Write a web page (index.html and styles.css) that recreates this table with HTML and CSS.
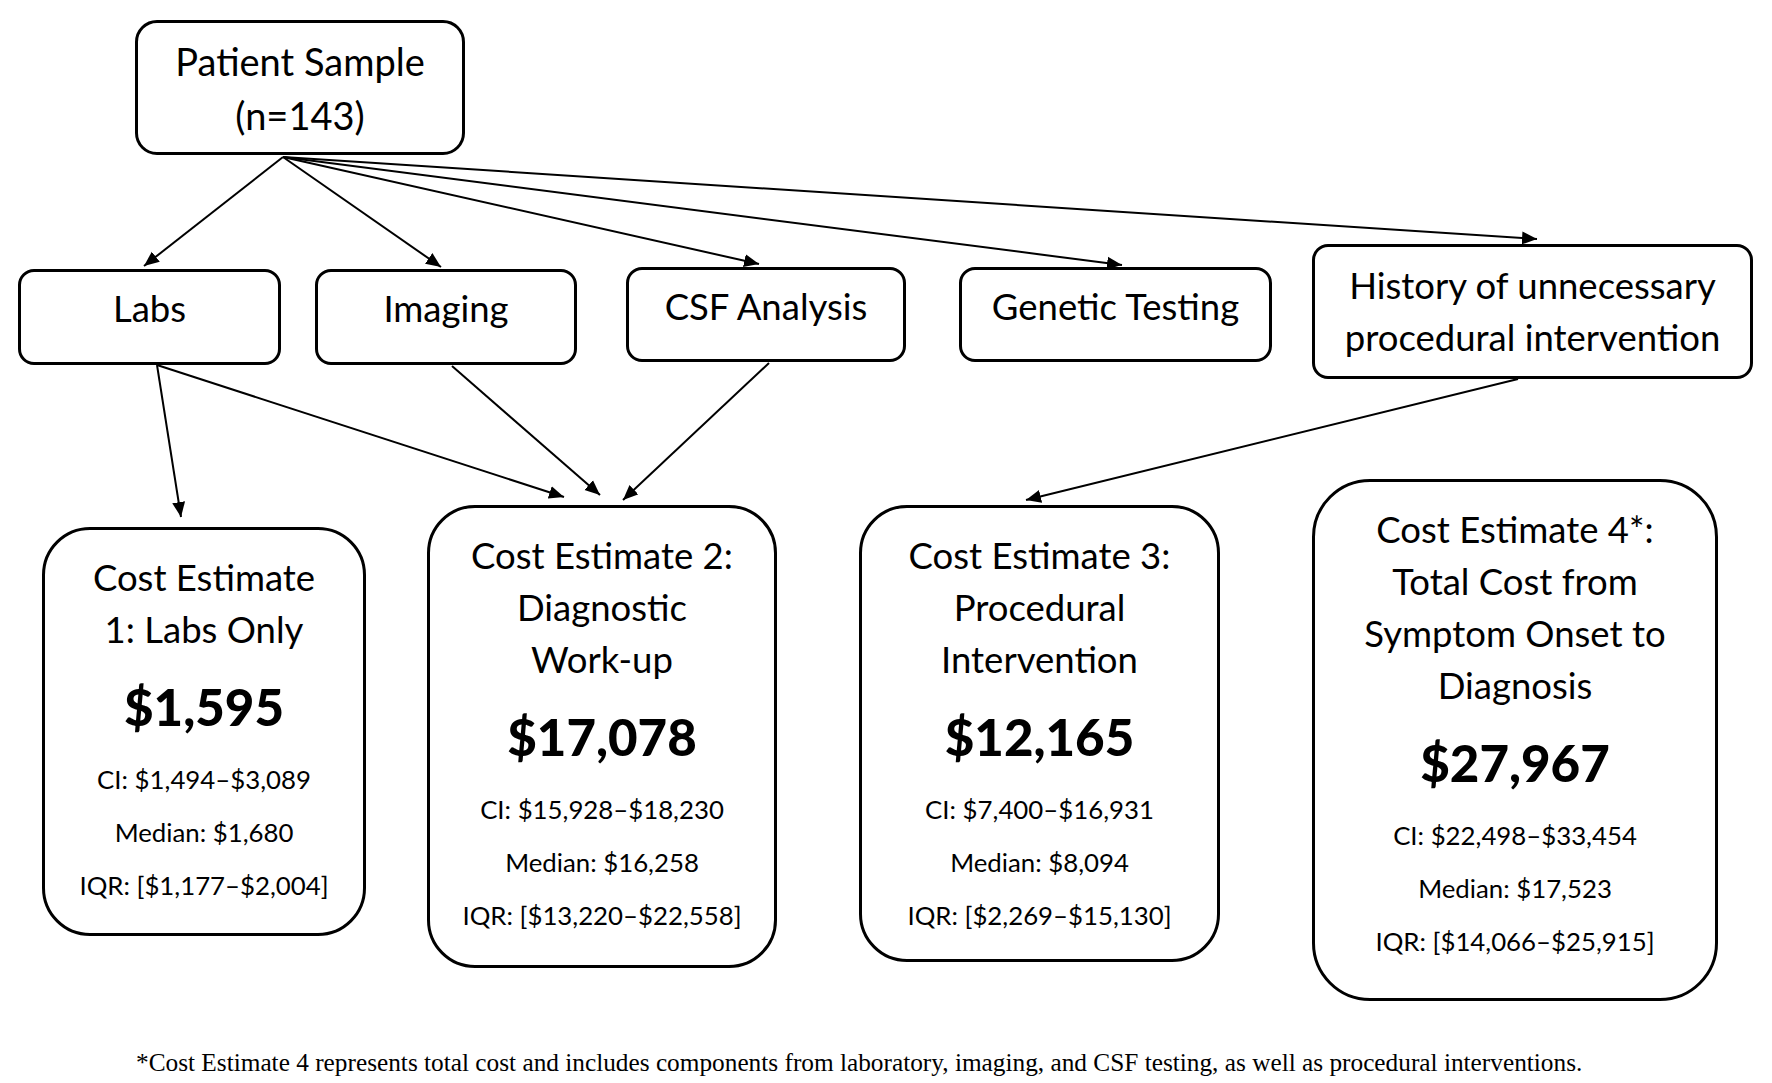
FILE: index.html
```html
<!DOCTYPE html>
<html lang="en">
<head>
<meta charset="utf-8">
<title>Cost Estimates Flowchart</title>
<link rel="stylesheet" href="styles.css">
</head>
<body>
<div class="page">
  <div class="diagram">
    <svg class="arrows" width="1772" height="1040" viewBox="0 0 1772 1040">
      <defs>
        <marker id="ah" markerUnits="userSpaceOnUse" markerWidth="16" markerHeight="14" refX="15" refY="7" orient="auto">
          <path d="M0,0.5 L15,7 L0,13.5 Z" fill="#000"/>
        </marker>
      </defs>
      <g stroke="#000" stroke-width="2" fill="none" marker-end="url(#ah)">
        <line x1="283" y1="157" x2="144" y2="266"/>
        <line x1="283" y1="157" x2="441" y2="267"/>
        <line x1="283" y1="157" x2="759" y2="264"/>
        <line x1="283" y1="157" x2="1122" y2="265"/>
        <line x1="283" y1="157" x2="1537" y2="239"/>
        <line x1="157" y1="365" x2="181" y2="517"/>
        <line x1="157" y1="365" x2="564" y2="497"/>
        <line x1="452" y1="366" x2="600" y2="495"/>
        <line x1="769" y1="363" x2="623" y2="500"/>
        <line x1="1518" y1="379" x2="1026" y2="500"/>
      </g>
    </svg>

    <div class="node top patient" style="left:135px;top:20px;width:330px;height:135px;">
      <div class="ln">Patient Sample</div>
      <div class="ln">(n=143)</div>
    </div>

    <div class="node cat" style="left:18px;top:269px;width:263px;height:96px;"><div class="ln">Labs</div></div>
    <div class="node cat" style="left:315px;top:269px;width:262px;height:96px;"><div class="ln">Imaging</div></div>
    <div class="node cat" style="left:626px;top:267px;width:280px;height:95px;"><div class="ln">CSF Analysis</div></div>
    <div class="node cat" style="left:959px;top:267px;width:313px;height:95px;"><div class="ln">Genetic Testing</div></div>
    <div class="node cat history" style="left:1312px;top:244px;width:441px;height:135px;">
      <div class="ln">History of unnecessary</div>
      <div class="ln">procedural intervention</div>
    </div>

    <div class="node est" style="left:42px;top:527px;width:324px;height:409px;">
      <div class="ln">Cost Estimate</div>
      <div class="ln">1: Labs Only</div>
      <div class="price">$1,595</div>
      <div class="stat first">CI: $1,494–$3,089</div>
      <div class="stat">Median: $1,680</div>
      <div class="stat">IQR: [$1,177–$2,004]</div>
    </div>

    <div class="node est" style="left:427px;top:505px;width:350px;height:463px;">
      <div class="ln">Cost Estimate 2:</div>
      <div class="ln">Diagnostic</div>
      <div class="ln">Work-up</div>
      <div class="price">$17,078</div>
      <div class="stat first">CI: $15,928–$18,230</div>
      <div class="stat">Median: $16,258</div>
      <div class="stat">IQR: [$13,220–$22,558]</div>
    </div>

    <div class="node est" style="left:859px;top:505px;width:361px;height:457px;">
      <div class="ln">Cost Estimate 3:</div>
      <div class="ln">Procedural</div>
      <div class="ln">Intervention</div>
      <div class="price">$12,165</div>
      <div class="stat first">CI: $7,400–$16,931</div>
      <div class="stat">Median: $8,094</div>
      <div class="stat">IQR: [$2,269–$15,130]</div>
    </div>

    <div class="node est big" style="left:1312px;top:479px;width:406px;height:522px;">
      <div class="ln">Cost Estimate 4*:</div>
      <div class="ln">Total Cost from</div>
      <div class="ln">Symptom Onset to</div>
      <div class="ln">Diagnosis</div>
      <div class="price">$27,967</div>
      <div class="stat first">CI: $22,498–$33,454</div>
      <div class="stat">Median: $17,523</div>
      <div class="stat">IQR: [$14,066–$25,915]</div>
    </div>
  </div>
  <p class="footnote">*Cost Estimate 4 represents total cost and includes components from laboratory, imaging, and CSF testing, as well as procedural interventions.</p>
</div>
</body>
</html>
```

FILE: styles.css
```css
html, body {
  margin: 0;
  padding: 0;
  background: #fff;
}

.page {
  width: 1772px;
  height: 1083px;
  overflow: hidden;
  background: #fff;
  color: #000;
}

.diagram {
  position: relative;
  width: 1772px;
  height: 1040px;
}

.arrows {
  position: absolute;
  left: 0;
  top: 0;
  pointer-events: none;
}

.node {
  position: absolute;
  box-sizing: border-box;
  border: 3px solid #000;
  background: #fff;
  display: flex;
  flex-direction: column;
  align-items: center;
  font-family: "Lato", "Liberation Sans", sans-serif;
  font-weight: 400;
  text-align: center;
  white-space: nowrap;
}

.ln {
  font-size: 36.5px;
  line-height: 52px;
}

.top {
  border-radius: 22px;
  justify-content: center;
}

.top .ln {
  font-size: 38px;
  line-height: 54px;
}

.cat {
  border-radius: 16px;
  padding-top: 10px;
}

.history {
  padding-top: 12px;
}

.est {
  border-radius: 48px;
  padding-top: 21px;
}

.est.big {
  border-radius: 58px;
}

.price {
  font-size: 51px;
  font-weight: 900;
  line-height: 52px;
  margin-top: 26px;
}

.stat {
  font-size: 25.8px;
  line-height: 53px;
}

.stat.first {
  margin-top: 20px;
}

.footnote {
  margin: 0;
  padding-left: 136px;
  font-family: "Liberation Serif", "Times New Roman", serif;
  font-size: 25.3px;
  line-height: 30px;
  margin-top: 7px;
}
```
